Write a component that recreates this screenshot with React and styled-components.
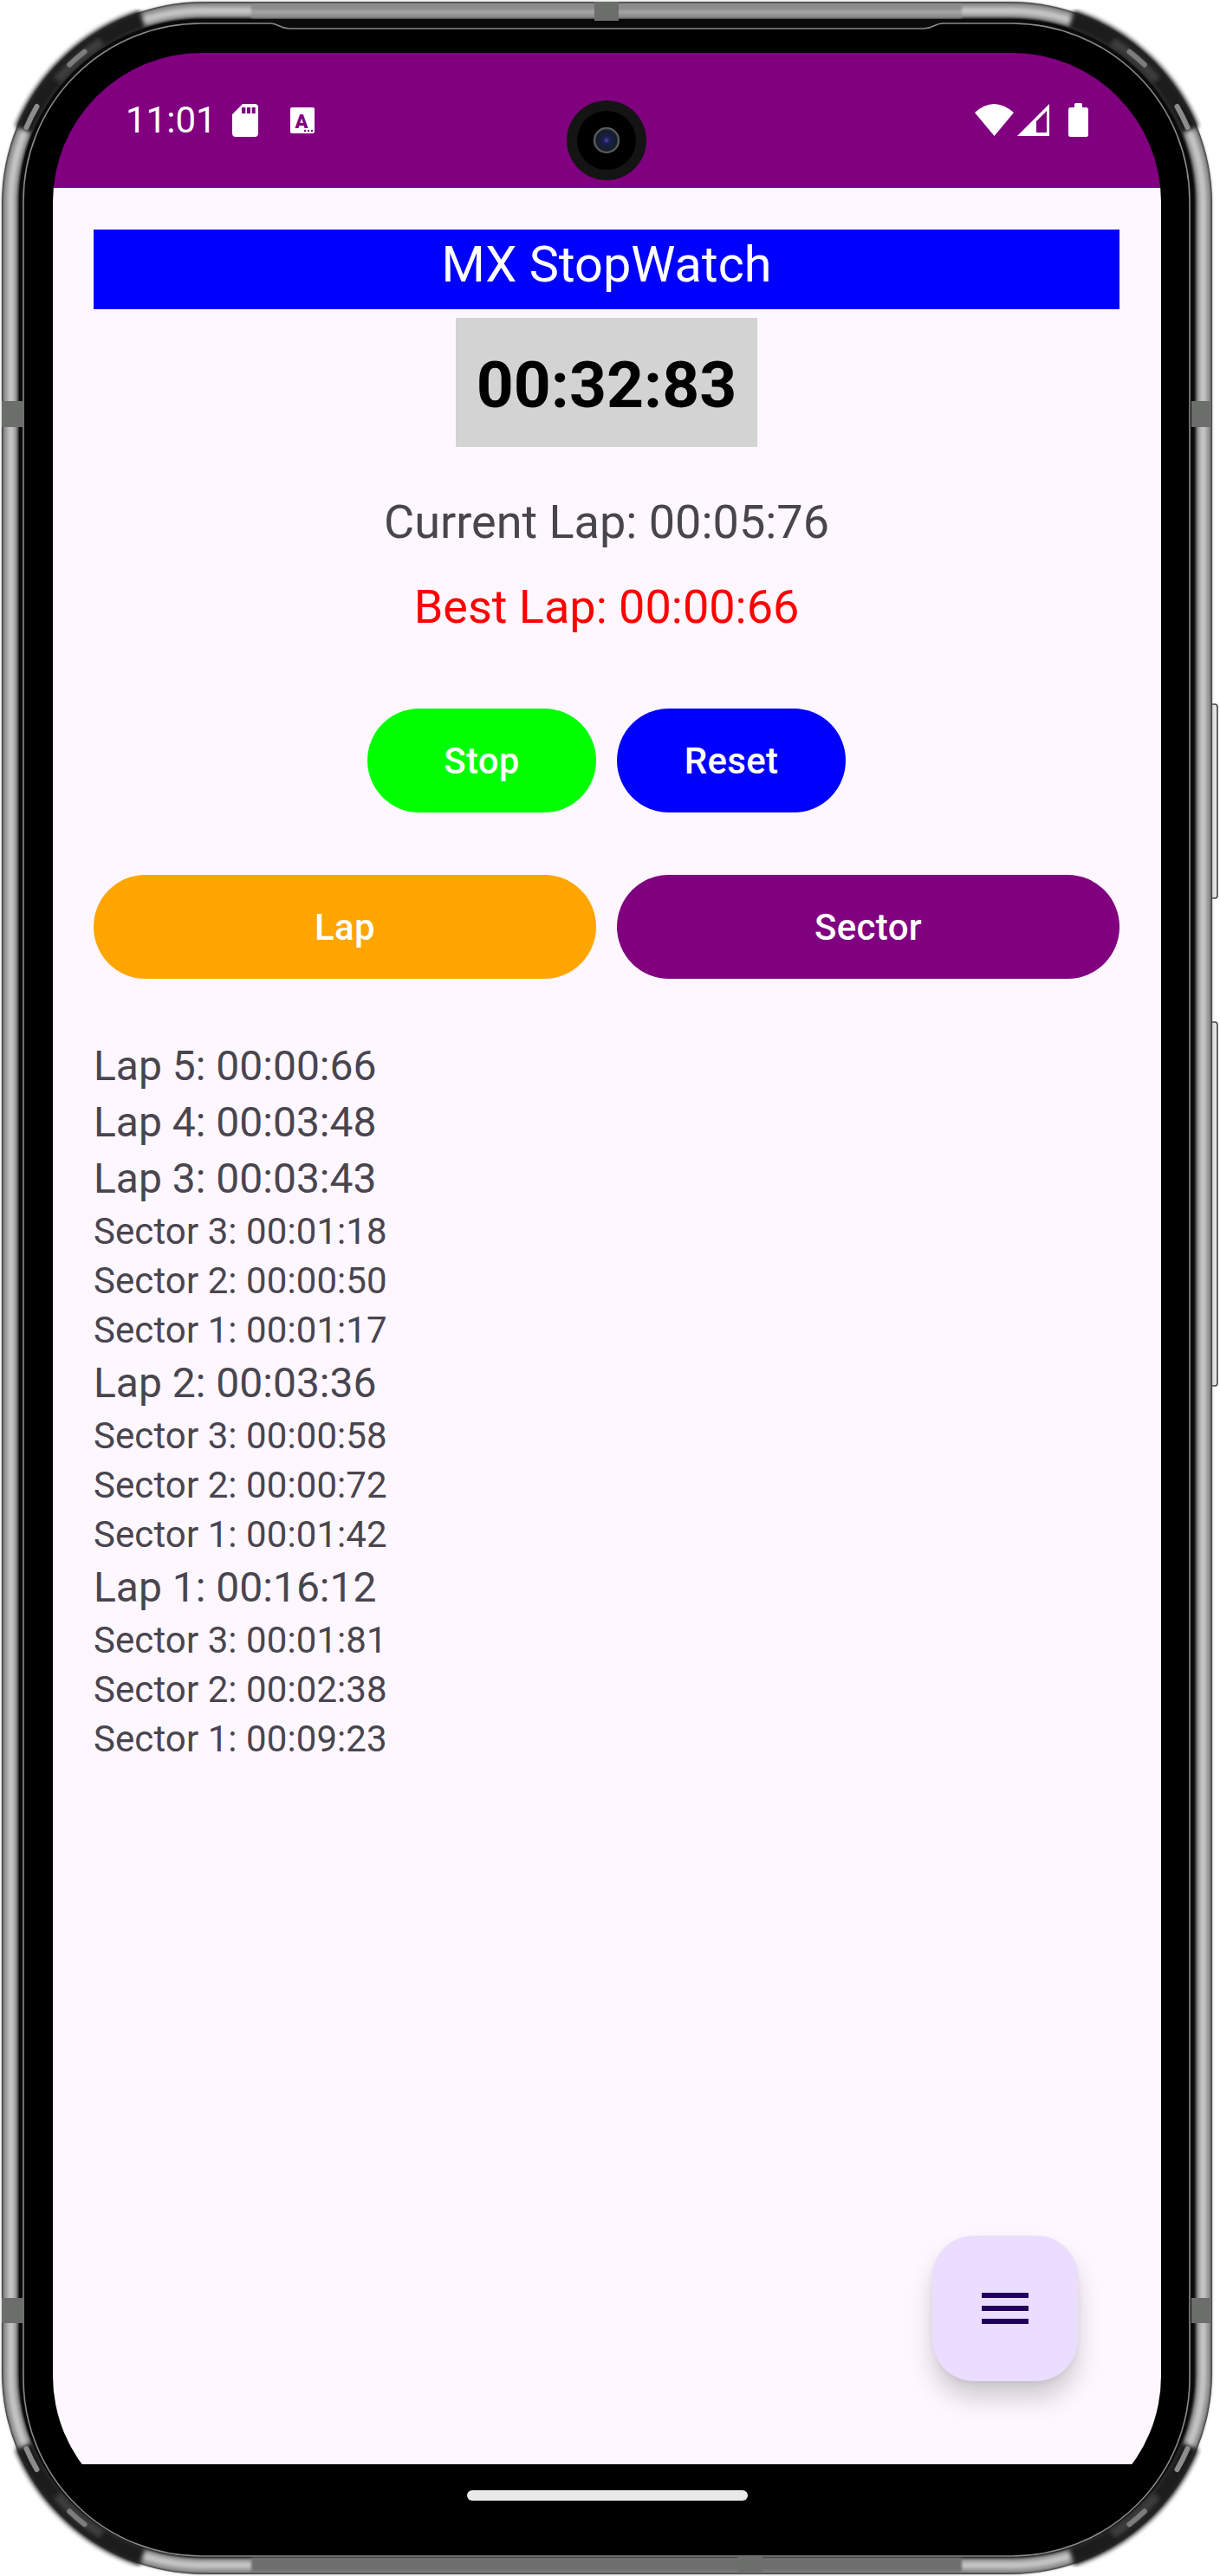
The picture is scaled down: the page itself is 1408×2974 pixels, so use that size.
import React from "react";
import styled, { createGlobalStyle } from "styled-components";

const Global = createGlobalStyle`
  html, body { margin: 0; padding: 0; background: #fff; }
  body { font-family: Roboto, "Liberation Sans", sans-serif; }
`;

const Device = styled.div`
  position: relative;
  width: 1408px;
  height: 2974px;
  box-sizing: border-box;
  padding: 61px 68px 59px 61px;
  overflow: hidden;
`;
const Frame = styled.svg`
  position: absolute;
  left: 0;
  top: 0;
`;
const Screen = styled.div`
  position: relative;
  height: 100%;
  display: flex;
  flex-direction: column;
  border-radius: 172px;
  overflow: hidden;
`;
const StatusBar = styled.div`
  position: relative;
  flex: 0 0 156px;
  background: #800080;
`;
const Camera = styled.svg`
  position: absolute;
  left: 593px;
  top: 55px;
`;
const StatusIcons = styled.svg`
  position: absolute;
  left: 0;
  top: 0;
`;
const Clock = styled.span`
  position: absolute;
  left: 84px;
  top: 53px;
  font-size: 42px;
  line-height: 49px;
  color: #fff;
`;
const Content = styled.main`
  position: relative;
  flex: 1;
  display: flex;
  flex-direction: column;
  align-items: center;
  padding: 48px 48px 0 47px;
  background: #fef7ff;
`;
const Title = styled.h1`
  align-self: stretch;
  margin: 0;
  height: 92px;
  background: #0000ff;
  color: #fff;
  font-size: 57.6px;
  font-weight: 400;
  line-height: 81px;
  text-align: center;
`;
const Timer = styled.div`
  box-sizing: border-box;
  margin-top: 10px;
  height: 149px;
  padding: 4px 24px 0;
  display: flex;
  align-items: center;
  background: #d3d3d3;
  color: #000;
  font-size: 75px;
  font-weight: 700;
`;
const Readout = styled.p`
  margin: ${(p) => p.$top}px 0 0;
  font-size: 54px;
  line-height: 64px;
  color: ${(p) => p.$color};
`;
const ButtonRow = styled.div`
  align-self: stretch;
  display: flex;
  justify-content: center;
  gap: 24px;
  margin-top: ${(p) => p.$top}px;
`;
const Pill = styled.button`
  flex: ${(p) => (p.$wide ? "1 1 0" : "0 0 264px")};
  height: 120px;
  padding: 0;
  border: 0;
  border-radius: 60px;
  background: ${(p) => p.$bg};
  color: #fff;
  font-family: inherit;
  font-size: 42px;
  font-weight: 500;
  letter-spacing: 0.3px;
`;
const LapList = styled.ul`
  align-self: stretch;
  list-style: none;
  margin: 68px 0 0;
  padding: 0;
  color: #49454f;
`;
const LapRow = styled.li`
  height: 65px;
  line-height: 65px;
  font-size: 48px;
`;
const SectorRow = styled.li`
  height: 57px;
  line-height: 57px;
  font-size: 42px;
  letter-spacing: 0.08px;
`;
const Fab = styled.button`
  position: absolute;
  left: 1015px;
  top: 2520px;
  width: 168px;
  height: 168px;
  padding: 0;
  border: 0;
  border-radius: 48px;
  display: flex;
  align-items: center;
  justify-content: center;
  background: #eaddff;
  box-shadow: 0 20px 30px -2px rgba(0, 0, 0, 0.2), 0 3px 8px -2px rgba(0, 0, 0, 0.08);
`;
const NavBar = styled.div`
  flex: 0 0 70px;
  display: flex;
  justify-content: center;
  padding-top: 30px;
  box-sizing: border-box;
  background: #000;
`;
const HomePill = styled.div`
  width: 324px;
  height: 12px;
  border-radius: 6px;
  background: #e9e9e9;
`;

const C = 233, R = 221;
const pt = (a, r = R) => {
  const t = (a * Math.PI) / 180;
  return `${(C - r * Math.cos(t)).toFixed(1)} ${(C - r * Math.sin(t)).toFixed(1)}`;
};
const arc = (a, b, r = R) => `M${pt(a, r)} A${r} ${r} 0 0 1 ${pt(b, r)}`;

const Corner = () => (
  <g>
    <path d={arc(22, 72)} stroke="#1d1d1d" strokeWidth="23" fill="none" filter="url(#soft)" />
    <path d={arc(40, 58, R - 3)} stroke="#3c3c3c" strokeWidth="11" fill="none" filter="url(#soft)" />
    <path d={arc(23, 30, R - 1)} stroke="#8c8c8c" strokeWidth="6" strokeLinecap="round" fill="none" />
    <path d={arc(46, 52, R - 1)} stroke="#7c7c7c" strokeWidth="6" strokeLinecap="round" fill="none" />
  </g>
);

const bands = [
  [686, 2, 28, 22],
  [851, 2952, 29, 19],
  [2, 463, 24, 30],
  [2, 2653, 24, 29],
  [1375, 463, 23, 30],
  [1375, 2653, 23, 29],
];

const PhoneFrame = () => (
  <Frame width="1408" height="2974" viewBox="0 0 1408 2974">
    <defs>
      <filter id="soft" x="-10%" y="-10%" width="120%" height="120%">
        <feGaussianBlur stdDeviation="2.5" />
      </filter>
      <filter id="softer" x="-2%" y="-2%" width="104%" height="104%">
        <feGaussianBlur stdDeviation="1.4" />
      </filter>
      <filter id="railBlur" filterUnits="userSpaceOnUse" x="0" y="0" width="1408" height="2974">
        <feGaussianBlur stdDeviation="1.4" />
      </filter>
    </defs>
    <path d="M1398 813h4a3 3 0 0 1 3 3v218a3 3 0 0 1-3 3h-4" fill="#e4e4e4" stroke="#444" strokeWidth="1.6" />
    <path d="M1398 1180h4a3 3 0 0 1 3 3v414a3 3 0 0 1-3 3h-4" fill="#e4e4e4" stroke="#444" strokeWidth="1.6" />
    <rect x="2" y="2" width="1397" height="2970" rx="233" fill="#101010" />
    <g filter="url(#softer)">
      <rect x="4" y="4" width="1393" height="2966" rx="231" fill="none" stroke="#777" strokeWidth="3" />
      <rect x="12.5" y="12.5" width="1376" height="2949" rx="221" fill="none" stroke="#9a9a9a" strokeWidth="16" />
      <rect x="12.5" y="12.5" width="1376" height="2949" rx="221" fill="none" stroke="#c2c2c2" strokeWidth="7" />
    </g>
    <g filter="url(#railBlur)" fill="none">
      <path d="M290 13H1110" stroke="#8a8a8a" strokeWidth="16" />
      <path d="M290 14H1110" stroke="#a4a4a4" strokeWidth="5" />
      <path d="M290 2961H1110" stroke="#6e6e6e" strokeWidth="16" />
    </g>
    <Corner />
    <g transform="translate(1401 0) scale(-1 1)"><Corner /></g>
    <g transform="translate(0 2974) scale(1 -1)"><Corner /></g>
    <g transform="translate(1401 2974) scale(-1 -1)"><Corner /></g>
    <rect x="22" y="22" width="1356" height="2930" rx="211" fill="#0a0a0a" />
    <path
      d="M27 232A205 205 0 0 1 232 27H312C322 27 322 33 334 33H1066C1078 33 1078 27 1088 27H1168A205 205 0 0 1 1373 232V2746A205 205 0 0 1 1168 2951H232A205 205 0 0 1 27 2746Z"
      fill="#000"
      stroke="#8a8a8a"
      strokeWidth="1.6"
    />
    {bands.map(([x, y, w, h]) => (
      <rect key={`${x}-${y}`} x={x} y={y} width={w} height={h} fill="#6b6e6b" />
    ))}
  </Frame>
);

const Status = () => (
  <StatusIcons width="1279" height="156" viewBox="61 61 1279 156">
    <path
      fill="#fff"
      fillRule="evenodd"
      d="M280 120H294a4 4 0 0 1 4 4V154a4 4 0 0 1-4 4H272a4 4 0 0 1-4-4V132ZM279 124v7h4.3v-7ZM285 124v7h4v-7ZM290.7 124v7h4v-7Z"
    />
    <rect x="335" y="124" width="28" height="30" rx="2" fill="#fff" />
    <text x="348" y="148" textAnchor="middle" fontFamily="Roboto, sans-serif" fontWeight="900" fontSize="22" fill="#800080">A</text>
    <circle cx="352" cy="151" r="1.2" fill="#800080" />
    <circle cx="356" cy="151" r="1.2" fill="#800080" />
    <circle cx="360" cy="151" r="1.2" fill="#800080" />
    <path fill="#fff" d="M1125 130Q1147 110 1170 130L1147.500 157Z" />
    <path fill="#fff" fillRule="evenodd" d="M1174 157L1211 120V157ZM1196 153H1208V128L1196 140Z" />
    <path fill="#fff" d="M1240 124V120.500Q1240 119 1241.500 119H1247.500Q1249 119 1249 120.500V124H1253.500Q1256 124 1256 126.500V155.500Q1256 158 1253.500 158H1235.500Q1233 158 1233 155.500V126.500Q1233 124 1235.500 124Z" />
  </StatusIcons>
);

const Lens = () => (
  <Camera width="92" height="92" viewBox="0 0 92 92">
    <defs>
      <radialGradient id="glass" cx="50%" cy="50%" r="50%">
        <stop offset="0" stopColor="#5a3fd0" />
        <stop offset="0.25" stopColor="#1a1f4a" />
        <stop offset="0.78" stopColor="#141c28" />
        <stop offset="1" stopColor="#7c7c7c" />
      </radialGradient>
    </defs>
    <circle cx="46" cy="46" r="46" fill="#141414" />
    <circle cx="46" cy="46" r="34" fill="#000" />
    <circle cx="46" cy="46" r="15" fill="url(#glass)" />
  </Camera>
);

const rows = [
  ["L", "Lap 5: 00:00:66"], ["L", "Lap 4: 00:03:48"], ["L", "Lap 3: 00:03:43"],
  ["S", "Sector 3: 00:01:18"], ["S", "Sector 2: 00:00:50"], ["S", "Sector 1: 00:01:17"],
  ["L", "Lap 2: 00:03:36"],
  ["S", "Sector 3: 00:00:58"], ["S", "Sector 2: 00:00:72"], ["S", "Sector 1: 00:01:42"],
  ["L", "Lap 1: 00:16:12"],
  ["S", "Sector 3: 00:01:81"], ["S", "Sector 2: 00:02:38"], ["S", "Sector 1: 00:09:23"],
];

export default function App() {
  return (
    <Device>
      <Global />
      <PhoneFrame />
      <Screen>
        <StatusBar>
          <Clock>11:01</Clock>
          <Status />
          <Lens />
        </StatusBar>
        <Content>
          <Title>MX StopWatch</Title>
          <Timer>00:32:83</Timer>
          <Readout $top={55} $color="#49454f">Current Lap: 00:05:76</Readout>
          <Readout $top={34} $color="#ff0000">Best Lap: 00:00:66</Readout>
          <ButtonRow $top={85}>
            <Pill $bg="#00ff00">Stop</Pill>
            <Pill $bg="#0000ff">Reset</Pill>
          </ButtonRow>
          <ButtonRow $top={72}>
            <Pill $wide $bg="#ffa500">Lap</Pill>
            <Pill $wide $bg="#800080">Sector</Pill>
          </ButtonRow>
          <LapList>
            {rows.map(([kind, text], i) =>
              kind === "L" ? <LapRow key={i}>{text}</LapRow> : <SectorRow key={i}>{text}</SectorRow>
            )}
          </LapList>
        </Content>
        <NavBar>
          <HomePill />
        </NavBar>
        <Fab aria-label="Menu">
          <svg width="72" height="72" viewBox="0 0 24 24" fill="#21005d">
            <path d="M3 18h18v-2H3v2zm0-5h18v-2H3v2zm0-7v2h18V6H3z" />
          </svg>
        </Fab>
      </Screen>
    </Device>
  );
}
